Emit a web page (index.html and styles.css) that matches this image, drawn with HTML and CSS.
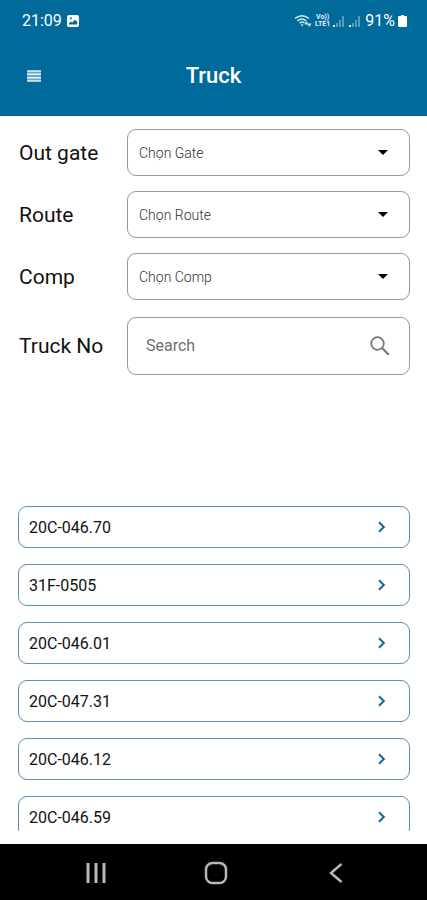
FILE: index.html
```html
<!DOCTYPE html>
<html lang="en">
<head>
<meta charset="utf-8">
<meta name="viewport" content="width=device-width, initial-scale=1">
<title>Truck</title>
<link rel="stylesheet" href="styles.css">
</head>
<body>
<div class="screen">
  <header class="header">
    <div class="status">
      <div class="status-group">
        <span>21:09</span>
        <svg width="12" height="12" viewBox="0 0 12 12"><path fill="#fff" fill-rule="evenodd" d="M2 0h8a2 2 0 0 1 2 2v8a2 2 0 0 1-2 2H2a2 2 0 0 1-2-2V2a2 2 0 0 1 2-2zM2 9.500h8.200V7L8 4.800 5.200 7.600 3.800 6.400 2 8.200zM3 2.500v1.800h1.800V2.500z"/></svg>
      </div>
      <div class="status-group status-right">
        <svg width="17" height="14" viewBox="0 0 17 14" fill="none" stroke="#d5e6ef" stroke-width="1.400"><path d="M0 4.500Q7-1 14 4.500M2.300 7q4.700-4 9 0M4.600 9.200q2.500-2.200 5 0"/><path fill="#d5e6ef" stroke="none" d="M5.600 10.500h3l-1.500 2zM9.500 10.500l2-3.500 2 3.500zM12 9.500h4.600l-2.300 3.500z"/></svg>
        <span class="lte"><span>Vo))</span><span>LTE1</span></span>
        <svg width="13" height="13" viewBox="0 0 13 13"><path fill="#d5e6ef" d="M0 10h2v2H0z"/><path fill="#5b9bbd" d="M3 8h2v4H3zM6 5h2v7H6zM9 1h2v11H9z"/></svg>
        <svg width="13" height="13" viewBox="0 0 13 13"><path fill="#d5e6ef" d="M0 10h2v2H0z"/><path fill="#5b9bbd" d="M3 8h2v4H3zM6 5h2v7H6zM9 1h2v11H9z"/></svg>
        <span>91%</span>
        <svg width="9" height="12" viewBox="0 0 9 12"><path fill="#fff" d="M3 0h3v1h2q1 0 1 1v9q0 1-1 1H1q-1 0-1-1V2q0-1 1-1h2z"/></svg>
      </div>
    </div>
    <div class="appbar">
      <button class="menu" type="button" aria-label="Menu">
        <svg width="14" height="12" viewBox="0 0 14 12"><path fill="#6ca6c3" d="M0 1h14v10H0z"/><path stroke="#e5eff4" stroke-width="1.500" d="M0 1h14M0 4.300h14M0 7.700h14M0 11h14"/></svg>
      </button>
      <h1 class="title">Truck</h1>
    </div>
  </header>

  <main class="main">
    <form class="form">
      <label class="label" for="gate">Out gate</label>
      <div class="field">
        <select class="select" id="gate"><option>Chọn Gate</option></select>
        <svg class="arrow" width="10" height="5" viewBox="0 0 10 5"><path d="M0 0h10L5 5z"/></svg>
      </div>
      <label class="label" for="route">Route</label>
      <div class="field">
        <select class="select" id="route"><option>Chọn Route</option></select>
        <svg class="arrow" width="10" height="5" viewBox="0 0 10 5"><path d="M0 0h10L5 5z"/></svg>
      </div>
      <label class="label" for="comp">Comp</label>
      <div class="field">
        <select class="select" id="comp"><option>Chọn Comp</option></select>
        <svg class="arrow" width="10" height="5" viewBox="0 0 10 5"><path d="M0 0h10L5 5z"/></svg>
      </div>
      <label class="label label-search" for="truck">Truck No</label>
      <div class="field field-search">
        <input class="search" id="truck" type="text" placeholder="Search">
        <svg class="glass" width="20" height="20" viewBox="0 0 20 20" fill="none" stroke="#777"><circle cx="7.500" cy="7.500" r="6.300" stroke-width="1.800"/><path d="M12.300 12.300l6.500 6.500" stroke-width="2.200"/></svg>
      </div>
    </form>

    <div class="list">
      <button class="item" type="button">20C-046.70<svg width="8" height="12" viewBox="0 0 8 12"><path d="M1 1.200L5.800 6 1 10.800"/></svg></button>
      <button class="item" type="button">31F-0505<svg width="8" height="12" viewBox="0 0 8 12"><path d="M1 1.200L5.800 6 1 10.800"/></svg></button>
      <button class="item" type="button">20C-046.01<svg width="8" height="12" viewBox="0 0 8 12"><path d="M1 1.200L5.800 6 1 10.800"/></svg></button>
      <button class="item" type="button">20C-047.31<svg width="8" height="12" viewBox="0 0 8 12"><path d="M1 1.200L5.800 6 1 10.800"/></svg></button>
      <button class="item" type="button">20C-046.12<svg width="8" height="12" viewBox="0 0 8 12"><path d="M1 1.200L5.800 6 1 10.800"/></svg></button>
      <button class="item" type="button">20C-046.59<svg width="8" height="12" viewBox="0 0 8 12"><path d="M1 1.200L5.800 6 1 10.800"/></svg></button>
    </div>
  </main>

  <nav class="nav">
    <button class="nav-button" type="button" aria-label="Recent apps"><svg width="24" height="24" viewBox="0 0 24 24"><path d="M4 2v20M12 2v20M20 2v20" stroke-width="3"/></svg></button>
    <button class="nav-button" type="button" aria-label="Home"><svg width="24" height="24" viewBox="0 0 24 24"><rect x="2" y="2" width="20" height="20" rx="6.500" stroke-width="2.500"/></svg></button>
    <button class="nav-button" type="button" aria-label="Back"><svg width="24" height="24" viewBox="0 0 24 24"><path d="M17.500 3L7 12l10.500 9" stroke-width="2.500"/></svg></button>
  </nav>
</div>
</body>
</html>
```
FILE: styles.css
```css
* {
  box-sizing: border-box;
}

body {
  margin: 0;
  background: #fff;
  color: #111;
  font-family: Roboto, "Liberation Sans", sans-serif;
}

button,
input,
select {
  margin: 0;
  border: 0;
  background: none;
  font-family: inherit;
}

svg {
  display: block;
  flex: none;
}

.screen {
  display: flex;
  flex-direction: column;
  height: 100vh;
}

.header {
  flex: none;
  padding-bottom: 20px;
  background: #006a9a;
  color: #fff;
}

.status {
  display: flex;
  justify-content: space-between;
  padding: 12px 20px 0 22px;
  font-size: 16px;
  line-height: 18px;
}

.status-group {
  display: flex;
  align-items: center;
  gap: 5px;
}

.status-right {
  gap: 3px;
}

.lte {
  display: grid;
  color: #e3eef4;
  font-size: 7px;
  font-weight: 700;
  line-height: 7px;
  text-align: center;
}

.appbar {
  display: grid;
  grid-template-columns: 48px 1fr 48px;
  align-items: center;
  padding: 26px 10px 0;
}

.menu {
  display: grid;
  place-items: center;
  height: 40px;
  padding: 0;
}

.title {
  margin: 0;
  font-size: 22px;
  font-weight: 500;
  line-height: 40px;
  text-align: center;
}

.main {
  display: flex;
  flex: 1;
  flex-direction: column;
  justify-content: space-between;
  min-height: 0;
  padding: 13px 17px 13px 18px;
}

.form {
  display: grid;
  grid-template-columns: 93px 1fr;
  gap: 15px;
  align-items: center;
  padding-left: 1px;
}

.label {
  font-size: 21px;
  line-height: 24px;
}

.field {
  display: grid;
  align-items: center;
  height: 47px;
  border: 1px solid #999;
  border-radius: 9px;
}

.select,
.search,
.arrow,
.glass {
  grid-area: 1 / 1;
}

.select {
  width: 100%;
  height: 100%;
  padding: 0 36px 0 11px;
  appearance: none;
  color: #333;
  font-size: 14px;
  font-weight: 300;
}

.arrow {
  justify-self: end;
  margin-right: 21px;
  pointer-events: none;
}

.field-search {
  height: 58px;
}

.field-search,
.label-search {
  margin-top: 2px;
}

.search {
  width: 100%;
  height: 100%;
  padding: 0 48px 2px 18px;
  color: #333;
  font-size: 16px;
}

.search::placeholder {
  color: #707070;
  opacity: 1;
}

.glass {
  justify-self: end;
  margin-right: 19px;
  pointer-events: none;
}

.list {
  display: flex;
  flex-direction: column;
  gap: 16px;
  height: 325px;
  overflow: hidden;
}

.item {
  display: flex;
  flex: none;
  align-items: center;
  justify-content: space-between;
  height: 42px;
  padding: 0 23px 0 10px;
  border: 1px solid #5c8fab;
  border-radius: 9px;
  color: #111;
  font-size: 16px;
}

.item svg {
  fill: none;
  stroke: #126a94;
  stroke-width: 2;
}

.nav {
  display: flex;
  flex: none;
  align-items: center;
  justify-content: center;
  gap: 72px;
  height: 56px;
  padding-top: 2px;
  padding-left: 4px;
  background: #000;
}

.nav-button {
  display: grid;
  place-items: center;
  width: 48px;
  height: 48px;
  padding: 0;
}

.nav-button svg {
  fill: none;
  stroke: #b8b8b8;
}
```
